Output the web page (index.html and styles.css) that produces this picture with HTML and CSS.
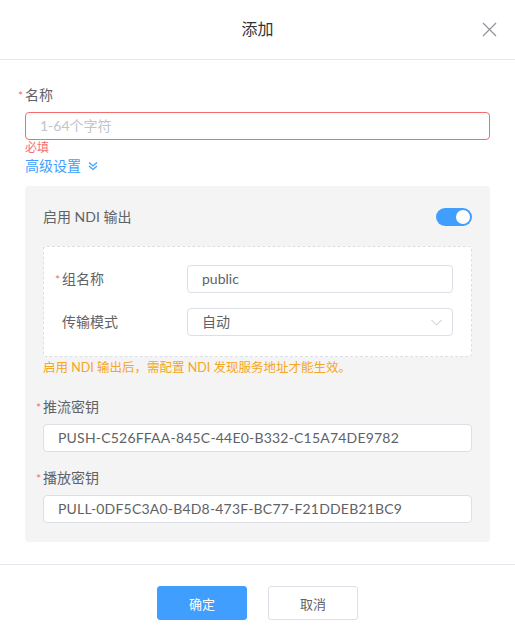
FILE: index.html
```html
<!DOCTYPE html>
<html lang="zh">
<head>
<meta charset="utf-8">
<title>添加</title>
<link rel="stylesheet" href="styles.css">
</head>
<body>
<div class="dialog">
  <div class="header">
    <span class="title">添加</span>
    <svg class="close" width="15" height="15" viewBox="0 0 15 15"><path d="M1 1L14 14M14 1L1 14" stroke="#909399" stroke-width="1.2" fill="none"/></svg>
  </div>
  <div class="content">
    <div class="label"><span class="req">*</span>名称</div>
    <div class="input error"><span class="placeholder">1-64个字符</span></div>
    <div class="err-msg">必填</div>
    <div class="advanced">高级设置
      <svg class="dbl" width="10" height="10" viewBox="0 0 10 10"><path d="M1 1.5L5 5L9 1.5M1 5L5 8.5L9 5" stroke="#409eff" stroke-width="1.3" fill="none"/></svg>
    </div>
    <div class="panel">
      <div class="ndi-row">
        <span class="ndi-label">启用 NDI 输出</span>
        <span class="switch"><span class="knob"></span></span>
      </div>
      <div class="dashed">
        <div class="inline-row">
          <div class="inline-label"><span class="req">*</span>组名称</div>
          <div class="input small"><span class="value">public</span></div>
        </div>
        <div class="inline-row">
          <div class="inline-label"><span class="req hidden">*</span>传输模式</div>
          <div class="input small select"><span class="value">自动</span>
            <svg class="arrow" width="11" height="7" viewBox="0 0 11 7"><path d="M0.5 1L5.5 6L10.5 1" stroke="#c0c4cc" stroke-width="1" fill="none"/></svg>
          </div>
        </div>
      </div>
      <div class="warn">启用 NDI 输出后，需配置 NDI 发现服务地址才能生效。</div>
      <div class="label key-label"><span class="req">*</span>推流密钥</div>
      <div class="input"><span class="value key">PUSH-C526FFAA-845C-44E0-B332-C15A74DE9782</span></div>
      <div class="label key-label second"><span class="req">*</span>播放密钥</div>
      <div class="input"><span class="value key">PULL-0DF5C3A0-B4D8-473F-BC77-F21DDEB21BC9</span></div>
    </div>
  </div>
  <div class="footer">
    <button class="btn primary">确定</button>
    <button class="btn">取消</button>
  </div>
</div>
</body>
</html>
```
FILE: styles.css
```css
* { box-sizing: border-box; }
html, body { margin: 0; padding: 0; background: #fff; }
body {
  font-family: Lato, "Noto Sans CJK SC", sans-serif;
  font-size: 14px;
  color: #606266;
  width: 515px;
  height: 639px;
  overflow: hidden;
}
.dialog { width: 515px; }
.header {
  height: 60px;
  border-bottom: 1px solid #e4e7ed;
  display: flex;
  align-items: center;
  justify-content: center;
  position: relative;
}
.title { font-size: 16px; color: #303133; line-height: 20px; margin-top: -1px; }
.close { position: absolute; right: 18px; top: 22px; }
.content { padding: 25px 25px 0 25px; }
.label { line-height: 20px; color: #606266; }
.req { color: #f56c6c; font-size: 12px; display: inline-block; width: 7px; margin-left: -7px; }
.req.hidden { visibility: hidden; }
.input {
  height: 28px;
  border: 1px solid #dcdfe6;
  border-radius: 4px;
  background: #fff;
  display: flex;
  align-items: center;
  padding-left: 14px;
  margin-top: 6px;
  line-height: 20px;
}
.input.error { border-color: #f56c6c; }
.placeholder { color: #c0c4cc; }
.value { color: #606266; }
.value.key { letter-spacing: 0.2px; }
.err-msg { color: #f56c6c; font-size: 12px; line-height: 14px; margin-top: 1px; }
.advanced { color: #409eff; line-height: 20px; margin-top: 1px; display: flex; align-items: center; }
.dbl { margin-left: 7px; }
.panel {
  background: #f4f4f4;
  border-radius: 4px;
  margin-top: 10px;
  padding: 21px 18px 19px 18px;
}
.ndi-row { display: flex; justify-content: space-between; align-items: center; height: 20px; }
.ndi-label { line-height: 20px; }
.switch {
  width: 36px; height: 18px; border-radius: 9px; background: #409eff;
  display: flex; align-items: center; justify-content: flex-end; padding-right: 2px;
}
.knob { width: 14px; height: 14px; border-radius: 50%; background: #fff; }
.dashed {
  margin-top: 19px;
  background: #fff;
  border: 1px dashed #dcdfe6;
  border-radius: 4px;
  padding: 18px 18px 20px 11px;
  display: flex;
  flex-direction: column;
  gap: 15px;
}
.inline-row { display: flex; align-items: center; }
.inline-label { width: 132px; padding-left: 7px; line-height: 20px; }
.input.small { margin-top: 0; flex: 1; }
.select { justify-content: space-between; padding-right: 10px; }
.arrow { margin-top: 1px; }
.warn { color: #f5a623; font-size: 12.5px; line-height: 20px; margin-top: 1px; }
.key-label { margin-top: 19px; }
.key-label.second { margin-top: 16px; }
.footer {
  margin-top: 22px;
  border-top: 1px solid #e4e7ed;
  padding-top: 21px;
  display: flex;
  justify-content: center;
  gap: 21px;
}
.btn {
  width: 90px; height: 34px;
  border: 1px solid #dcdfe6;
  border-radius: 3px;
  background: #fff;
  color: #606266;
  font-family: Lato, "Noto Sans CJK SC", sans-serif;
  font-size: 13px;
  padding: 0;
}
.btn.primary { background: #409eff; border-color: #409eff; color: #fff; }
```
